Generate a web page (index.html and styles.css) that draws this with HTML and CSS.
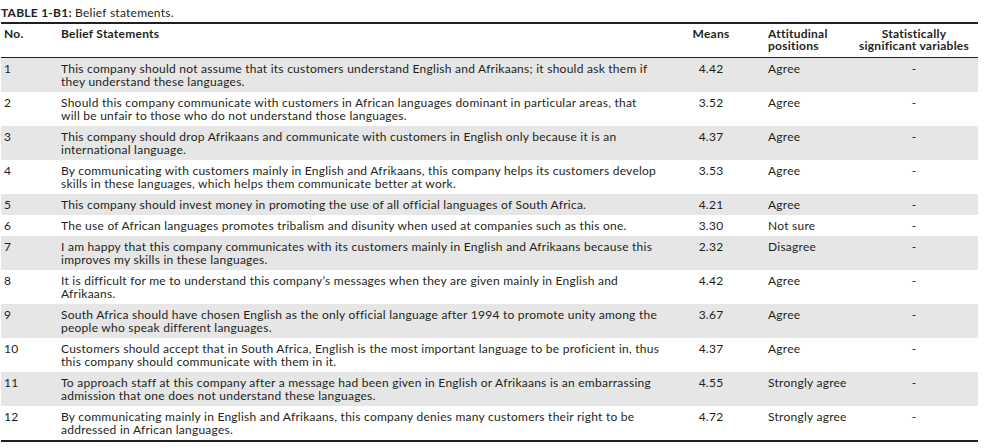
FILE: index.html
```html
<!DOCTYPE html>
<html lang="en">
<head>
<meta charset="utf-8">
<title>Table 1-B1: Belief statements</title>
<link rel="stylesheet" href="styles.css">
</head>
<body>
<div class="page">
  <div class="caption"><b>TABLE 1-B1:</b> Belief statements.</div>
  <table class="beliefs">
    <colgroup>
      <col class="c-no">
      <col class="c-stmt">
      <col class="c-mean">
      <col class="c-pos">
      <col class="c-sig">
    </colgroup>
    <thead>
      <tr>
        <th class="no">No.</th>
        <th class="stmt">Belief Statements</th>
        <th class="mean">Means</th>
        <th class="pos">Attitudinal<br>positions</th>
        <th class="sig">Statistically<br>significant variables</th>
      </tr>
    </thead>
    <tbody>
      <tr class="shade">
        <td class="no">1</td>
        <td class="stmt">This company should not assume that its customers understand English and Afrikaans; it should ask them if<br>they understand these languages.</td>
        <td class="mean">4.42</td>
        <td class="pos">Agree</td>
        <td class="sig">-</td>
      </tr>
      <tr>
        <td class="no">2</td>
        <td class="stmt">Should this company communicate with customers in African languages dominant in particular areas, that<br>will be unfair to those who do not understand those languages.</td>
        <td class="mean">3.52</td>
        <td class="pos">Agree</td>
        <td class="sig">-</td>
      </tr>
      <tr class="shade">
        <td class="no">3</td>
        <td class="stmt">This company should drop Afrikaans and communicate with customers in English only because it is an<br>international language.</td>
        <td class="mean">4.37</td>
        <td class="pos">Agree</td>
        <td class="sig">-</td>
      </tr>
      <tr>
        <td class="no">4</td>
        <td class="stmt">By communicating with customers mainly in English and Afrikaans, this company helps its customers develop<br>skills in these languages, which helps them communicate better at work.</td>
        <td class="mean">3.53</td>
        <td class="pos">Agree</td>
        <td class="sig">-</td>
      </tr>
      <tr class="shade">
        <td class="no">5</td>
        <td class="stmt">This company should invest money in promoting the use of all official languages of South Africa.</td>
        <td class="mean">4.21</td>
        <td class="pos">Agree</td>
        <td class="sig">-</td>
      </tr>
      <tr>
        <td class="no">6</td>
        <td class="stmt">The use of African languages promotes tribalism and disunity when used at companies such as this one.</td>
        <td class="mean">3.30</td>
        <td class="pos">Not sure</td>
        <td class="sig">-</td>
      </tr>
      <tr class="shade">
        <td class="no">7</td>
        <td class="stmt">I am happy that this company communicates with its customers mainly in English and Afrikaans because this<br>improves my skills in these languages.</td>
        <td class="mean">2.32</td>
        <td class="pos">Disagree</td>
        <td class="sig">-</td>
      </tr>
      <tr>
        <td class="no">8</td>
        <td class="stmt">It is difficult for me to understand this company’s messages when they are given mainly in English and<br>Afrikaans.</td>
        <td class="mean">4.42</td>
        <td class="pos">Agree</td>
        <td class="sig">-</td>
      </tr>
      <tr class="shade">
        <td class="no">9</td>
        <td class="stmt">South Africa should have chosen English as the only official language after 1994 to promote unity among the<br>people who speak different languages.</td>
        <td class="mean">3.67</td>
        <td class="pos">Agree</td>
        <td class="sig">-</td>
      </tr>
      <tr>
        <td class="no">10</td>
        <td class="stmt">Customers should accept that in South Africa, English is the most important language to be proficient in, thus<br>this company should communicate with them in it.</td>
        <td class="mean">4.37</td>
        <td class="pos">Agree</td>
        <td class="sig">-</td>
      </tr>
      <tr class="shade">
        <td class="no">11</td>
        <td class="stmt">To approach staff at this company after a message had been given in English or Afrikaans is an embarrassing<br>admission that one does not understand these languages.</td>
        <td class="mean">4.55</td>
        <td class="pos">Strongly agree</td>
        <td class="sig">-</td>
      </tr>
      <tr>
        <td class="no">12</td>
        <td class="stmt">By communicating mainly in English and Afrikaans, this company denies many customers their right to be<br>addressed in African languages.</td>
        <td class="mean">4.72</td>
        <td class="pos">Strongly agree</td>
        <td class="sig">-</td>
      </tr>
    </tbody>
  </table>
</div>
</body>
</html>
```

FILE: styles.css
```css
html, body {
  margin: 0;
  padding: 0;
  background: #ffffff;
}

body {
  font-family: Lato, "Open Sans", "Liberation Sans", sans-serif;
  font-size: 12px;
  letter-spacing: 0.25px;
  color: #231f20;
}

.page {
  padding: 6px 10px 0 1px;
}

.caption {
  line-height: 14px;
  margin-bottom: 2px;
  white-space: nowrap;
}

.caption b {
  font-weight: 700;
}

.beliefs {
  width: 977px;
  border-collapse: collapse;
  table-layout: fixed;
  border-top: 2px solid #231f20;
  border-bottom: 2px solid #231f20;
}

.c-no { width: 57px; }
.c-stmt { width: 614px; }
.c-mean { width: 78px; }
.c-pos { width: 100px; }
.c-sig { width: 128px; }

.beliefs th,
.beliefs td {
  box-sizing: border-box;
  vertical-align: top;
  text-align: left;
  white-space: nowrap;
  overflow: hidden;
}

.beliefs th {
  font-weight: 700;
  line-height: 12px;
  padding: 4px 0 5px 3px;
  border-bottom: 1px solid #231f20;
}

.beliefs td {
  font-weight: 400;
  line-height: 13px;
  padding: 4px 0 4px 3px;
}

.beliefs .mean {
  text-align: center;
  padding-left: 0;
}

.beliefs .pos {
  padding-left: 18px;
}

.beliefs .sig {
  text-align: center;
  padding-left: 0;
}

.beliefs tr.shade td {
  background: #e6e6e6;
}
```
